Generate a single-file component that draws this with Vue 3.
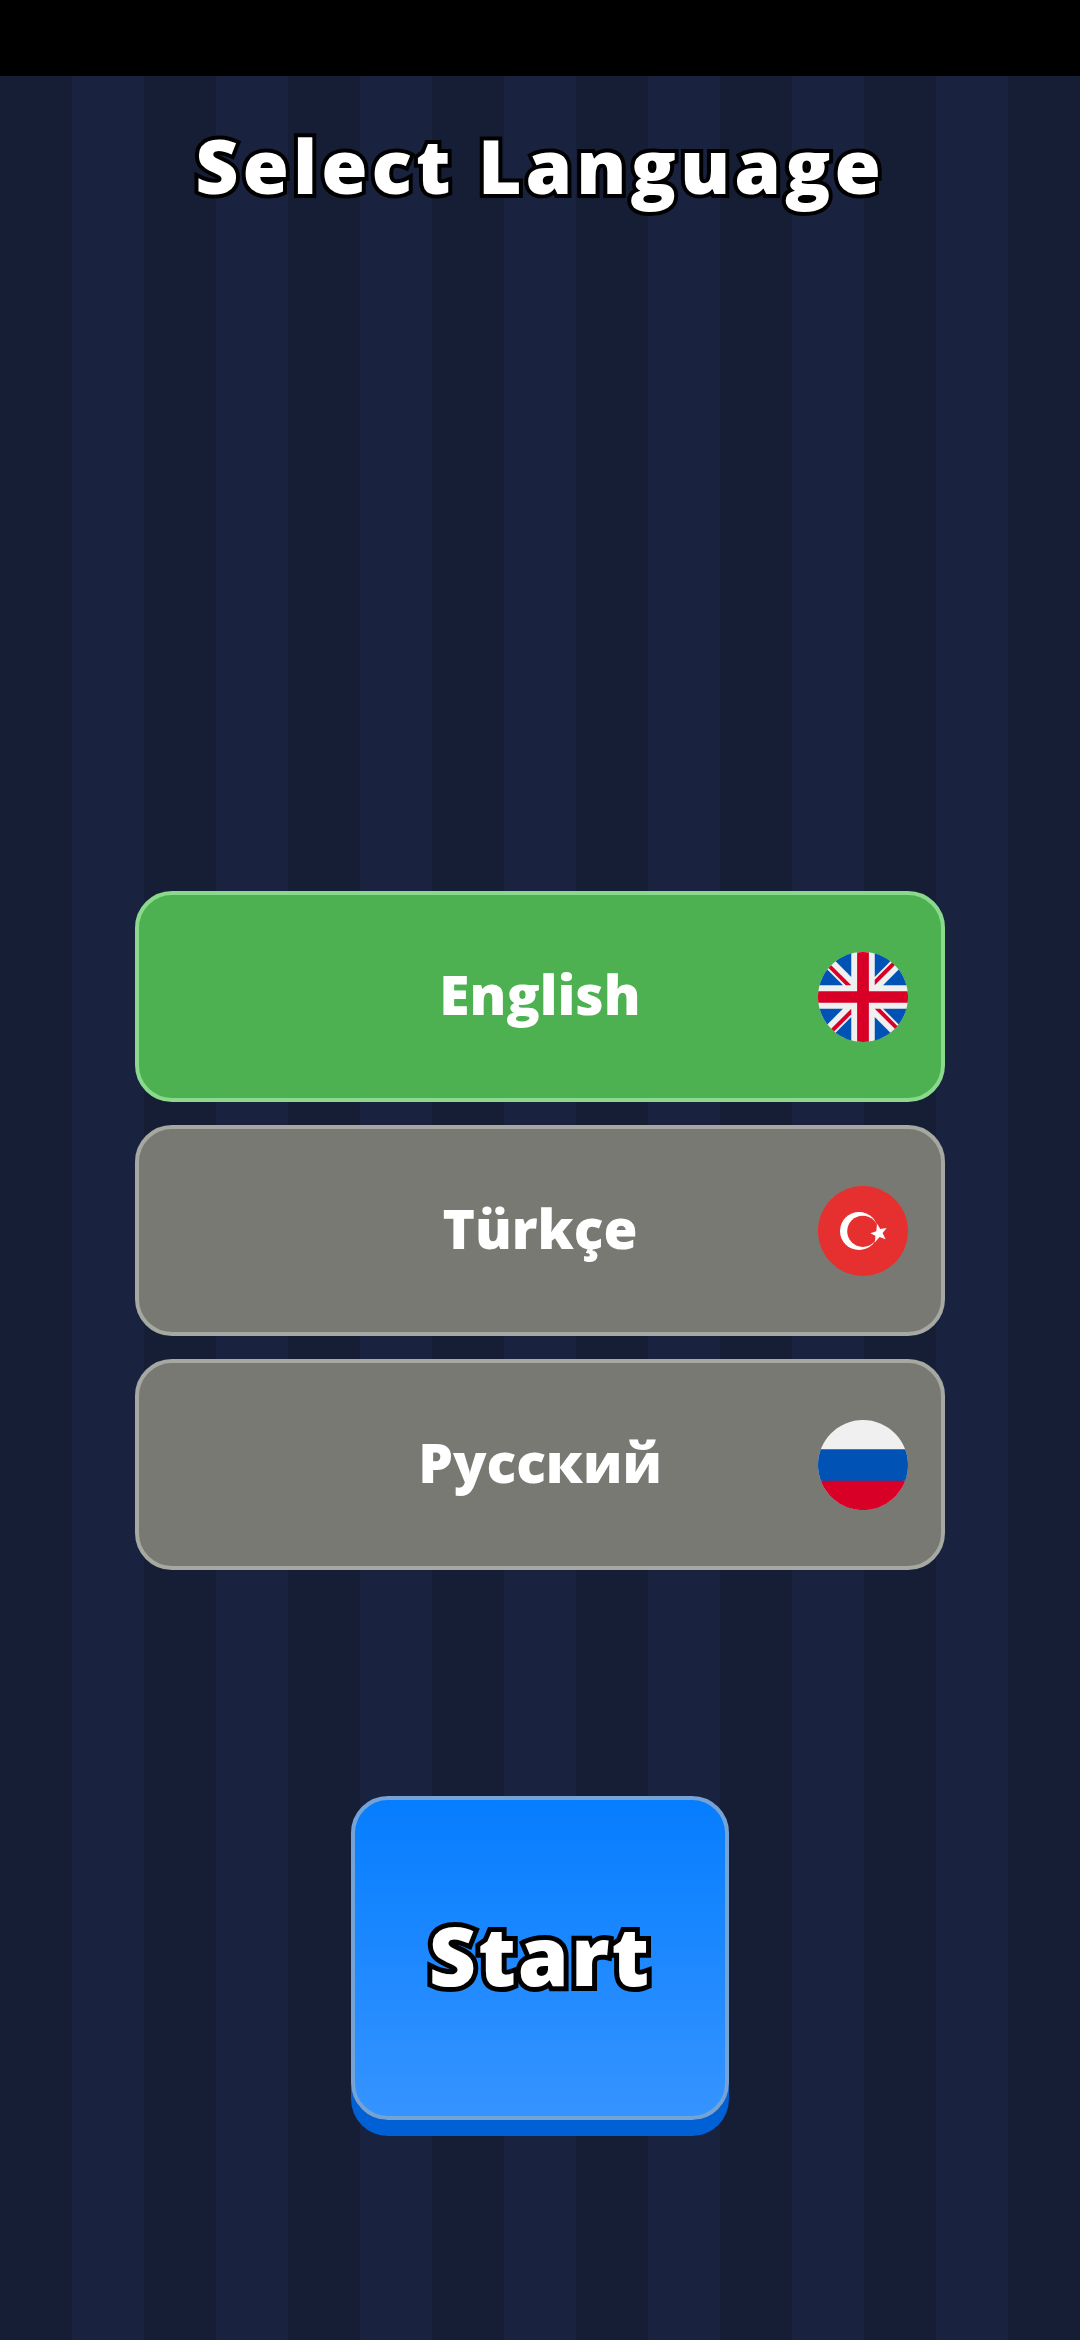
<script setup>
import { ref } from 'vue'

const languages = [
  { code: 'en', name: 'English' },
  { code: 'tr', name: 'Türkçe' },
  { code: 'ru', name: 'Русский' }
]

const selected = ref('en')
const started = ref(false)

const start = () => {
  started.value = true
}
</script>

<template>
  <div class="screen">
    <div class="status-bar"></div>

    <main class="content">
      <h1 class="title">Select Language</h1>

      <div class="languages">
        <button
          v-for="lang in languages"
          :key="lang.code"
          type="button"
          class="language"
          :class="{ active: selected === lang.code }"
          :aria-pressed="selected === lang.code"
          :lang="lang.code"
          @click="selected = lang.code"
        >
          <span class="name">{{ lang.name }}</span>

          <svg v-if="lang.code === 'en'" class="flag" viewBox="0 0 512 512" aria-hidden="true">
            <circle cx="256" cy="256" r="256" fill="#f0f0f0" />
            <g fill="#0052b4">
              <path d="M52.92 100.142c-20.109 26.163-35.272 56.318-44.101 89.077h133.178z" />
              <path d="M503.181 189.219c-8.829-32.758-23.993-62.913-44.101-89.076l-89.075 89.076z" />
              <path d="M8.819 322.784c8.83 32.758 23.993 62.913 44.101 89.075l89.074-89.075z" />
              <path d="M411.858 52.921c-26.163-20.109-56.317-35.272-89.076-44.102v133.177z" />
              <path d="M100.142 459.079c26.163 20.109 56.318 35.272 89.076 44.102V370.005z" />
              <path d="M189.217 8.819c-32.758 8.83-62.913 23.993-89.075 44.101l89.075 89.075z" />
              <path d="M322.783 503.181c32.758-8.83 62.913-23.993 89.075-44.101l-89.075-89.075z" />
              <path d="M370.005 322.784l89.075 89.076c20.108-26.162 35.272-56.318 44.101-89.076z" />
            </g>
            <g fill="#d80027">
              <path d="M509.833 222.609H289.392V2.167a258 258 0 0 0-66.783 0v220.441H2.167a258 258 0 0 0 0 66.783h220.441v220.442a258 258 0 0 0 66.783 0V289.392h220.442a258 258 0 0 0 0-66.783z" />
              <path d="M322.783 322.784L437.019 437.02c5.254-5.252 10.266-10.743 15.048-16.435l-97.802-97.802z" />
              <path d="M189.215 322.784L74.98 437.019c5.252 5.254 10.743 10.266 16.435 15.048l97.802-97.804v-31.479z" />
              <path d="M189.217 189.217L74.981 74.98c-5.254 5.252-10.266 10.743-15.048 16.435l97.803 97.803z" />
              <path d="M322.783 189.219L437.02 74.981c-5.252-5.254-10.743-10.266-16.435-15.047l-97.802 97.803z" />
            </g>
          </svg>

          <svg v-else-if="lang.code === 'tr'" class="flag" viewBox="0 0 90 90" aria-hidden="true">
            <circle cx="45" cy="45" r="45" fill="#e63030" />
            <circle cx="41" cy="45" r="19" fill="#fff" />
            <circle cx="44.8" cy="45.3" r="15.6" fill="#e63030" />
            <path d="M59 37.7l3.3 5.4 6.4-1.1-4.1 5 3 6.3-6-2.3-4.6 5.3.4-6.6-5.1-2.4 6-2z" fill="#fff" />
          </svg>

          <svg v-else class="flag" viewBox="0 0 512 512" aria-hidden="true">
            <circle cx="256" cy="256" r="256" fill="#f0f0f0" />
            <path d="M496.077 345.043C506.368 317.311 512 287.314 512 256s-5.632-61.311-15.923-89.043H15.923C5.633 194.689 0 224.686 0 256s5.633 61.311 15.923 89.043L256 367.304z" fill="#0052b4" />
            <path d="M256 512c110.071 0 203.906-69.472 240.077-166.957H15.923C52.094 442.528 145.929 512 256 512z" fill="#d80027" />
          </svg>
        </button>
      </div>

      <button type="button" class="start" :disabled="started" @click="start">Start</button>
    </main>
  </div>
</template>

<style>
body {
  margin: 0;
  background: #161e36;
}
</style>

<style scoped>
.screen {
  min-height: 100vh;
  display: flex;
  flex-direction: column;
  font-family: "Open Sans", "Noto Sans", sans-serif;
  color: #fff;
  background: repeating-linear-gradient(to right, #161e35 0 72px, #19223f 72px 144px);
}
.status-bar {
  height: 76px;
  background: #000;
}
.content {
  flex: 1;
  display: flex;
  flex-direction: column;
  align-items: center;
}
.title {
  margin: 43px 0 0;
  font-size: 75px;
  line-height: 92px;
  font-weight: 800;
  letter-spacing: 4px;
  -webkit-text-stroke: 8px #000;
  paint-order: stroke fill;
}
.languages {
  width: 75%;
  margin-top: 680px;
  display: flex;
  flex-direction: column;
  gap: 23px;
}
.language {
  height: 211px;
  box-sizing: border-box;
  padding: 0 33px;
  display: grid;
  grid-template-columns: 90px 1fr 90px;
  align-items: center;
  border: 4px solid #a6a8a2;
  border-radius: 37px;
  background: #787973;
  color: #fff;
  font-family: inherit;
  font-size: 55px;
  line-height: 68px;
  font-weight: 800;
  cursor: pointer;
}
.language.active {
  background: #4eb151;
  border-color: #8ad98c;
}
.name {
  grid-column: 2;
  padding-bottom: 6px;
}
.flag {
  width: 90px;
  height: 90px;
  display: block;
}
.start {
  width: 35%;
  height: 324px;
  box-sizing: border-box;
  margin: 226px 0 40px;
  padding: 0 0 8px;
  border: 4px solid #76a3d6;
  border-radius: 37px;
  background: linear-gradient(#057dff, #3694ff) border-box;
  box-shadow: 0 16px 0 #0060d6;
  color: #fff;
  font-family: inherit;
  font-size: 82px;
  line-height: 100px;
  font-weight: 800;
  letter-spacing: 2px;
  -webkit-text-stroke: 10px #000;
  paint-order: stroke fill;
  cursor: pointer;
}
</style>
